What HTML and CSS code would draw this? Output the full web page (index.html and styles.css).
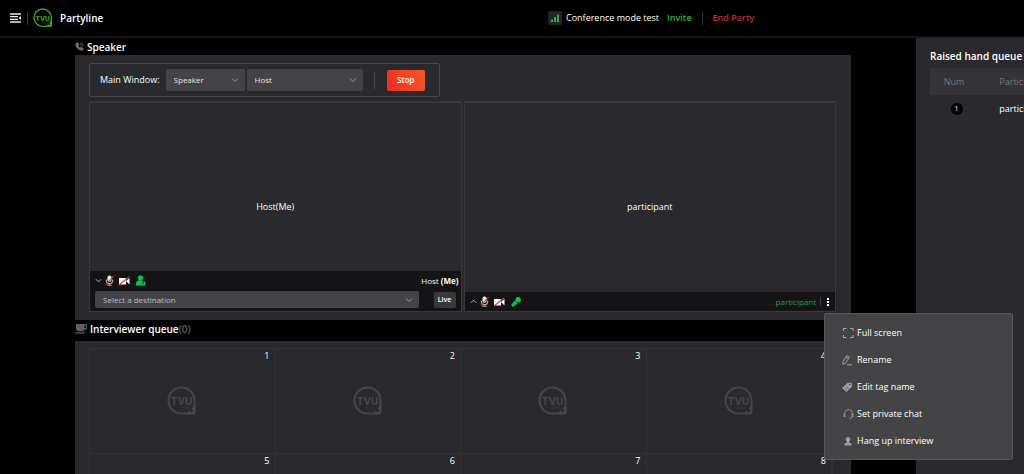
FILE: index.html
```html
<!DOCTYPE html>
<html lang="en">
<head>
<meta charset="utf-8">
<meta name="viewport" content="width=device-width, initial-scale=1">
<title>Partyline</title>
<link rel="stylesheet" href="styles.css">
</head>
<body>
<svg class="defs" aria-hidden="true">
  <symbol id="tvu" viewBox="0 0 30 30">
    <path d="M14.500 1.500a13 13 0 1 0 0 26H26q1.500 0 1.500-1.500V14.500a13 13 0 0 0-13-13z" fill="none" stroke="currentColor" stroke-width="2"/>
    <path d="M27 19c-2 4-5 7-9 9h8.500q1.500 0 1.500-1.500V19z" fill="currentColor"/>
    <path d="M23.500 22.500l3 2-3 2z" class="logo-hole"/>
    <text x="14.500" y="19" text-anchor="middle" class="logo-text">TVU</text>
    <path d="M12 22h10" stroke="currentColor" stroke-width="1" opacity=".5"/>
  </symbol>
  <symbol id="chevron" viewBox="0 0 8 8"><path d="M1 2.500l3 3 3-3" fill="none" stroke="currentColor"/></symbol>
  <symbol id="mic-off" viewBox="0 0 10 12">
    <rect x="2.800" y=".5" width="4.400" height="7" rx="2" fill="#f0f0f0"/>
    <path d="M1.500 5v1a3.500 3.500 0 0 0 7 0V5M5 9.500v2M2.500 11.300h5" fill="none" stroke="#aaa" stroke-width="1.300"/>
    <path d="M9.500 1L1 10.500" stroke="#d43b3b" stroke-width="1.200"/>
  </symbol>
  <symbol id="cam-off" viewBox="0 0 12 10">
    <rect x="1" y="2" width="7" height="6.500" rx=".5" fill="#fff"/>
    <path d="M8 5l3.500-3v6.500z" fill="#fff"/>
    <path d="M11 1L1 9" stroke="#d43b3b" stroke-width="1.300"/>
  </symbol>
</svg>
<div class="app">
  <header class="topbar">
    <div class="brand">
      <button class="icon-button" aria-label="Toggle menu">
        <svg class="menu-icon" viewBox="0 0 11 10"><path d="M0 1h11M0 3.700h8M0 6.400h8M0 9h11" stroke="#eee" stroke-width="1.300"/><path d="M11 3v4L8.500 5z" fill="#eee"/></svg>
      </button>
      <span class="brand-rule"></span>
      <svg class="brand-logo"><use href="#tvu"/></svg>
      <h1 class="brand-name">Partyline</h1>
    </div>
    <div class="session">
      <svg class="signal" viewBox="0 0 14 14"><rect width="14" height="14" rx="2" fill="#242428"/><path d="M3 8.500h2V11H3zM6 6h2v5H6zM9 3.500h2V11H9z" fill="#2fa84f"/></svg>
      <span class="session-name">Conference mode test</span>
      <button class="link-button invite">Invite</button>
      <span class="session-rule"></span>
      <button class="link-button end">End Party</button>
    </div>
  </header>
  <div class="body">
    <main class="main">
      <h2 class="section-title speaker-title">
        <svg class="phone" viewBox="0 0 10 10"><path d="M.8 1.500L3.500.3l1.500 3-1.200 1.200q.6 1.200 1.900 1.900l1.200-1.200L9.700 7l-1 2.500q-3.200.8-6.200-2.200T.8 1.500z" fill="#6c6c70"/><path d="M5.500 1a3.500 3.500 0 0 1 3.500 3.500M5.500 3A1.500 1.500 0 0 1 7 4.500" fill="none" stroke="#606064"/></svg>
        Speaker
      </h2>
      <section class="panel speaker-panel">
        <div class="toolbar">
          <label class="toolbar-label" for="window">Main Window:</label>
          <div class="select-pair">
            <span class="select select-window"><select id="window"><option>Speaker</option></select><svg><use href="#chevron"/></svg></span>
            <span class="select select-source"><select aria-label="Window source"><option>Host</option></select><svg><use href="#chevron"/></svg></span>
          </div>
          <span class="toolbar-rule"></span>
          <button class="stop">Stop</button>
        </div>
        <div class="tiles">
          <article class="tile">
            <div class="tile-view">Host(Me)</div>
            <div class="tile-footer">
              <div class="tile-row host-row">
                <button class="icon-button" aria-label="Collapse"><svg class="toggle"><use href="#chevron"/></svg></button>
                <svg class="mic"><use href="#mic-off"/></svg>
                <svg class="cam"><use href="#cam-off"/></svg>
                <svg class="host-icon" viewBox="0 0 10 11"><circle cx="4.500" cy="2.800" r="2.600" fill="#0abf5b"/><path d="M0 10.500V8q0-2 3-2.800h3q3 .8 3.500 2.800v2.500z" fill="#0abf5b"/><path d="M7 5v4" stroke="#141416" stroke-width=".8"/></svg>
                <span class="tile-name">Host <b>(Me)</b></span>
              </div>
              <div class="tile-row destination-row">
                <span class="select select-destination"><select aria-label="Destination"><option>Select a destination</option></select><svg><use href="#chevron"/></svg></span>
                <button class="live">Live</button>
              </div>
            </div>
          </article>
          <article class="tile">
            <div class="tile-view">participant</div>
            <div class="tile-footer">
              <div class="tile-row">
                <button class="icon-button" aria-label="Expand"><svg class="toggle toggle-up"><use href="#chevron"/></svg></button>
                <svg class="mic"><use href="#mic-off"/></svg>
                <svg class="cam"><use href="#cam-off"/></svg>
                <svg class="handheld" viewBox="0 0 10 10"><circle cx="7.200" cy="2.800" r="2.700" fill="#0abf5b"/><path d="M3.800 3.500l2.900 2.900L2 10 0 8z" fill="#0abf5b"/></svg>
                <span class="tile-name guest">participant</span>
                <span class="more">
                  <button class="icon-button" aria-label="More actions"><svg class="dots" viewBox="0 0 4 10"><path d="M1 1h2v2H1zM1 4h2v2H1zM1 7h2v2H1z" fill="#fff"/></svg></button>
                  <span class="menu" role="menu">
                    <button role="menuitem"><svg viewBox="0 0 12 12"><path d="M1.500 4V1.500h3M8 1.500h3V4M11 8v2.500H8M4.500 10.500h-3V8" fill="none" stroke="#a0a0a3" stroke-width="1.100"/></svg>Full screen</button>
                    <button role="menuitem"><svg viewBox="0 0 12 12"><path d="M1 7.500L5 1.500l2.500 1.700-4 6L.8 10.500zM4 3l2.500 1.800M5 10.800h5" fill="none" stroke="#a0a0a3"/></svg>Rename</button>
                    <button role="menuitem"><svg viewBox="0 0 12 12"><path d="M0 7l5.500-5 4-.5.500 4L4.500 11z" fill="#a0a0a3"/><circle cx="7.800" cy="3.500" r=".8" fill="#444447"/><path d="M3 7l2 2M4.500 5.500l2 2" stroke="#444447" stroke-width=".7"/></svg>Edit tag name</button>
                    <button role="menuitem"><svg viewBox="0 0 12 12"><path d="M2.500 7V5.500a4 4 0 0 1 8 0V8q0 2.500-3 2.500" fill="none" stroke="#8c8c90"/><path d="M1.500 5.500h2v3.500h-2zM9.500 5.500h2V9h-2z" fill="#8c8c90"/></svg>Set private chat</button>
                    <button role="menuitem"><svg viewBox="0 0 12 12"><ellipse cx="6" cy="4.500" rx="2.200" ry="2.500" fill="#a0a0a3"/><path d="M5 6h2v1.500l2.500 1v2h-7v-2l2.500-1z" fill="#a0a0a3"/></svg>Hang up interview</button>
                  </span>
                </span>
              </div>
            </div>
          </article>
        </div>
      </section>
      <h2 class="section-title queue-title">
        <svg class="cup" viewBox="0 0 13 11"><path d="M1 0h12v6h-2.500L9 8H3L1 6zM0 9h10.500v1.500H0z" fill="#606064"/><path d="M10.200 1.500h1.500v2.800h-1.500z" fill="#000"/></svg>
        <span>Interviewer queue<span class="count">(0)</span></span>
      </h2>
      <section class="panel queue-panel">
        <div class="slots">
          <div class="slot"><span>1</span><svg><use href="#tvu"/></svg></div>
          <div class="slot"><span>2</span><svg><use href="#tvu"/></svg></div>
          <div class="slot"><span>3</span><svg><use href="#tvu"/></svg></div>
          <div class="slot"><span>4</span><svg><use href="#tvu"/></svg></div>
          <div class="slot"><span>5</span><svg><use href="#tvu"/></svg></div>
          <div class="slot"><span>6</span><svg><use href="#tvu"/></svg></div>
          <div class="slot"><span>7</span><svg><use href="#tvu"/></svg></div>
          <div class="slot"><span>8</span><svg><use href="#tvu"/></svg></div>
        </div>
      </section>
    </main>
    <aside class="aside">
      <h2 class="aside-title">Raised hand queue</h2>
      <table class="hands">
        <thead><tr><th>Num</th><th>Participant</th></tr></thead>
        <tbody><tr><td><span class="num">1</span></td><td>participant</td></tr></tbody>
      </table>
    </aside>
  </div>
</div>
</body>
</html>
```
FILE: styles.css
```css
* { box-sizing: border-box; }
body {
  margin: 0;
  background: #000;
  color: #fff;
  font: 9px/12px "Open Sans", "Noto Sans", sans-serif;
}
h1, h2 { margin: 0; font-size: 10px; line-height: 14px; font-weight: 600; }
button, select { font: inherit; color: inherit; }
button { padding: 0; border: 0; background: none; cursor: pointer; }
svg { display: block; flex: none; }
.defs { display: none; }
.app { display: flex; flex-direction: column; height: 100vh; overflow: hidden; }

.topbar {
  display: grid;
  grid-template-columns: 1fr auto 1fr;
  align-items: center;
  flex: none;
  height: 38px;
  padding: 0 10px;
  border-bottom: 2px solid #161616;
}
.brand { display: flex; align-items: center; }
.menu-icon { width: 11px; height: 10px; }
.brand-rule { width: 1px; height: 14px; margin: 0 5px 0 6px; background: #3a3a3a; }
.brand-logo { width: 20px; height: 20px; color: #46a52c; }
.brand-name { margin-left: 7px; }
.logo-text { font: 700 11px Roboto, sans-serif; fill: currentColor; }
.logo-hole { fill: #202024; }
.session { grid-column: 3; display: flex; align-items: center; margin-left: 36px; white-space: nowrap; }
.signal { width: 14px; height: 14px; margin-right: 4px; }
.link-button { font-weight: 600; }
.invite { margin-left: 8px; color: #3fae49; }
.session-rule { width: 1px; height: 14px; margin: 0 10px; background: #333; }
.end { color: #c22f36; }

.body { display: flex; flex: 1; min-height: 0; padding-left: 75px; gap: 65px; }
.main { display: flex; flex-direction: column; flex: 1; min-width: 0; }
.section-title { display: flex; align-items: center; flex: none; }
.speaker-title { height: 17px; gap: 3px; }
.phone { width: 9px; height: 9px; }
.queue-title { height: 21px; gap: 3px; padding-bottom: 4px; }
.cup { width: 12px; height: 10px; }
.count { color: #606064; }
.panel { padding: 8px 15px 8px 14px; background: #2a292e; }
.speaker-panel { flex: none; }
.queue-panel { flex: 1; padding: 7px 18px 0 14px; min-height: 0; }

.toolbar {
  display: flex;
  align-items: center;
  width: fit-content;
  height: 34px;
  padding: 0 14px 0 10px;
  border: 1px solid #4a4a4d;
  border-radius: 2px;
}
.toolbar-label { margin-right: 6px; }
.select-pair { display: flex; gap: 2px; }
.select { display: flex; position: relative; }
.select select {
  appearance: none;
  width: 100%;
  height: 22px;
  padding: 0 20px 0 8px;
  border: 0;
  border-radius: 2px;
  background: #444448;
  color: #e6e6e6;
  font-size: 8px;
}
.select svg { position: absolute; right: 6px; top: 7px; width: 8px; height: 8px; color: #98989c; pointer-events: none; }
.select-window { width: 79px; }
.select-source { width: 116px; }
.toolbar-rule { width: 1px; height: 17px; margin: 0 12px 0 11px; background: #4a4a4d; }
.stop {
  width: 38px;
  height: 21px;
  border-radius: 2px;
  background: linear-gradient(60deg, #ee2a26, #f65a22);
  font-size: 8px;
  font-weight: 600;
}

.tiles { display: grid; grid-template-columns: 1fr 1fr; gap: 2px; margin-top: 4px; }
.tile { position: relative; height: 211px; border: 1px solid #39393b; border-top-width: 2px; }
.tile-view { display: flex; align-items: center; justify-content: center; height: 100%; }
.tile-footer { position: absolute; left: 0; right: 0; bottom: 0; background: #141416; }
.tile-row { display: flex; align-items: center; height: 19px; padding: 0 5px; font-size: 8px; }
.host-row { padding-right: 2px; }
.toggle { width: 7px; height: 7px; color: #ccc; }
.toggle-up { transform: rotate(180deg); }
.mic { width: 9px; height: 11px; margin-left: 3px; }
.cam { width: 12px; height: 10px; margin-left: 4px; }
.host-icon { width: 10px; height: 11px; margin-left: 6px; }
.handheld { width: 10px; height: 10px; margin-left: 6px; }
.tile-name { margin-left: auto; }
.guest { padding-right: 4px; border-right: 1px solid #3a3a3d; line-height: 9px; color: #2c9c4c; }
.destination-row { height: 21px; padding-bottom: 2px; gap: 15px; }
.select-destination { flex: 1; }
.select-destination select { height: 17px; color: #bdbdc0; }
.select-destination svg { top: 5px; }
.live { width: 22px; height: 16px; border-radius: 2px; background: #39393d; font-size: 7px; font-weight: 600; }
.more { display: flex; position: relative; margin-left: 5px; }
.dots { width: 4px; height: 10px; }

.menu {
  display: flex;
  flex-direction: column;
  position: absolute;
  left: -2px;
  top: 16px;
  z-index: 2;
  width: 189px;
  padding: 6px 0 4px;
  border: 1px solid #59595b;
  border-radius: 2px;
  background: #444447;
  font-size: 9px;
}
.menu button { display: flex; align-items: center; gap: 3px; height: 27px; padding-left: 17px; }
.menu svg { width: 12px; height: 12px; }

.slots { display: grid; grid-template-columns: repeat(4, 1fr); border: 1px solid #333333; }
.slot { display: flex; align-items: center; justify-content: center; position: relative; height: 105px; border: 1px solid #333333; border-width: 0 1px 1px 0; }
.slot span { position: absolute; top: 1px; right: 5px; }
.slot svg { width: 30px; height: 30px; color: #45454a; }

.aside { width: 108px; flex: none; padding: 11px 0 0 14px; background: #2a292e; overflow: hidden; white-space: nowrap; }
.hands { width: 136px; margin-top: 5px; border-collapse: collapse; table-layout: fixed; text-align: center; }
.hands th { height: 27px; padding: 0; background: #343338; color: #77777b; font-weight: 400; }
.hands th:first-child { width: 48px; }
.hands td { height: 28px; padding: 0; }
.num { display: inline-block; width: 12px; height: 12px; margin-left: 5px; border-radius: 50%; background: #000; font-size: 7px; vertical-align: middle; }
```
